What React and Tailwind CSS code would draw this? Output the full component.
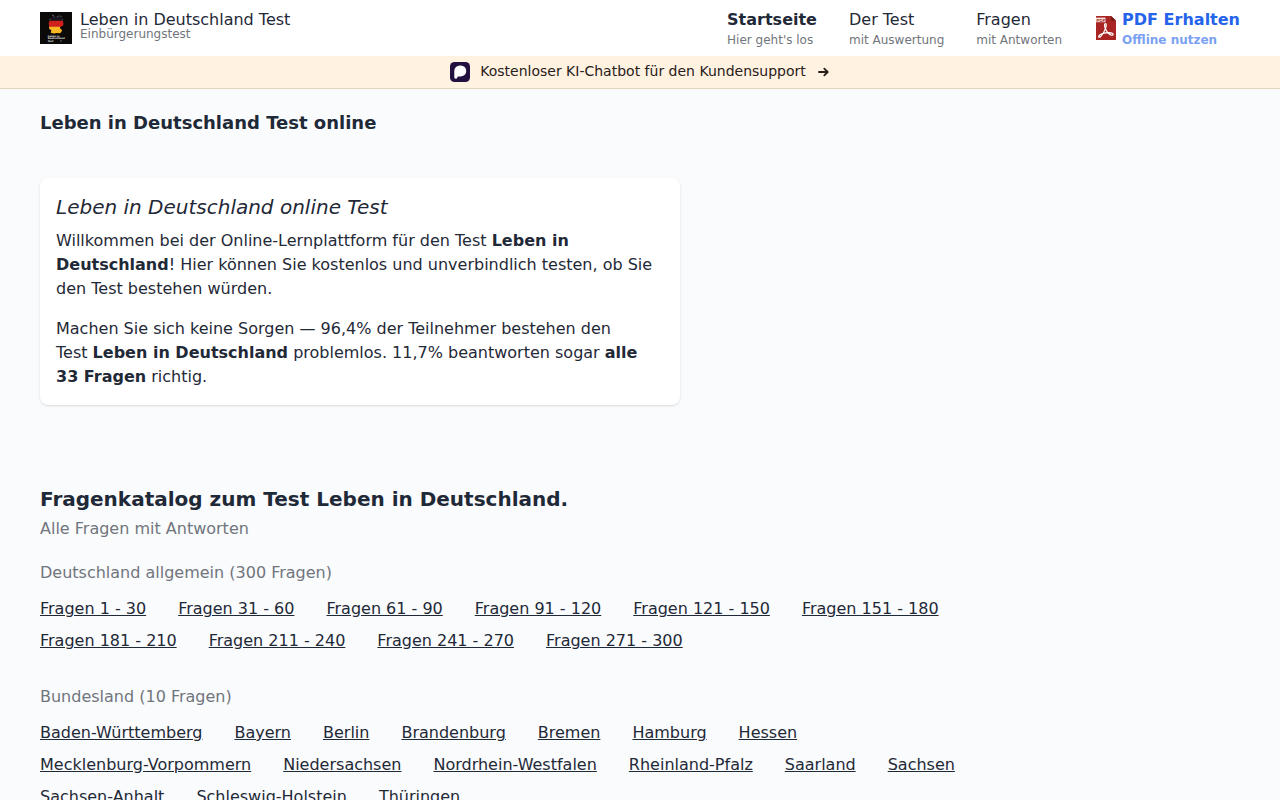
const general = [
  "Fragen 1 - 30", "Fragen 31 - 60", "Fragen 61 - 90", "Fragen 91 - 120", "Fragen 121 - 150",
  "Fragen 151 - 180", "Fragen 181 - 210", "Fragen 211 - 240", "Fragen 241 - 270", "Fragen 271 - 300",
];

const states = [
  "Baden-Württemberg", "Bayern", "Berlin", "Brandenburg", "Bremen", "Hamburg", "Hessen",
  "Mecklenburg-Vorpommern", "Niedersachsen", "Nordrhein-Westfalen", "Rheinland-Pfalz", "Saarland", "Sachsen",
  "Sachsen-Anhalt", "Schleswig-Holstein", "Thüringen",
];

const nav = [
  { title: "Startseite", sub: "Hier geht's los", active: true },
  { title: "Der Test", sub: "mit Auswertung" },
  { title: "Fragen", sub: "mit Antworten" },
];

function Logo() {
  return (
    <svg viewBox="0 0 32 32" className="size-8 shrink-0">
      <rect width="32" height="32" fill="#0b0a08" />
      <path d="M10.200 8.800L10 6.500l2.500-1.300L12 3l2.300.6 1.500 1.400 2.600-1.600 2.600.9 1.200 4.500z" fill="#1a1520" />
      <path d="M9.600 8.700h13.200l.6 2.800-.2 1.900-2.600 1.500H9.200l-.5-3.300z" fill="#cf211b" />
      <path d="M9 14.800h11.200l-.4 1.100 2.300 2.300-.8 1.700-1.300 1.300-3.300-.2-2.800.6-3.200-.9.700-2.500L9.300 17z" fill="#fbb724" />
      <path d="M12 3l2 .6M13.600 4.300l1 .8M16.800 5l2-1.200M20.300 3.500l1.300 1.800M10.200 6.700l-.4 1.600M22 7l.5 1.300" fill="none" stroke="#77808e" strokeWidth=".7" />
      <g fill="#eeeeee" fontFamily="DejaVu Sans" fontWeight="700" fontSize="2.400">
        <text x="7.800" y="24.600">Leben in</text>
        <text x="7.800" y="27.200">Deutschland</text>
        <text x="7.800" y="29.800">Test</text>
      </g>
      <path d="M20 29.400l1.800-.8" stroke="#bbb" strokeWidth=".6" />
    </svg>
  );
}

function PdfIcon() {
  return (
    <svg viewBox="0 0 24 28" className="h-7 w-6 shrink-0">
      <path d="M2 2h15.200L22 6.800V26H2z" fill="#a82523" />
      <path d="M17.200 2L22 6.800h-4.800z" fill="#761917" />
      <rect x="2" y="3.600" width="9.500" height="4.600" fill="#f3dfdb" />
      <text x="2.600" y="7.600" fontSize="4.400" fontWeight="700" fontFamily="Liberation Sans" fill="#a82523">PDF</text>
      <path d="M11.400 9.700c-1.400.2-.9 2.600-.1 4.600 1 2.700 3.500 5.900 6 6.800 1.500.5 2.500-.7 1.300-1.600-1.600-1.200-6.500-1-9.300-.2-2.200.7-4.300 2-4.600 3.200-.2 1 1 1 1.900.1 1.700-1.700 4-5.500 5-8.500.6-2 1.100-4.500-.2-4.400z" fill="none" stroke="#fff" strokeWidth="1.200" />
    </svg>
  );
}

function ChatLogo() {
  return (
    <svg viewBox="0 0 20 20" className="size-5">
      <rect width="20" height="20" rx="4.500" fill="#22103f" />
      <path d="M4.300 15V9a5.600 5.600 0 0 1 5.700-5.600h.8A5.500 5.500 0 0 1 16.200 9c0 3.300-2.500 5.400-5.700 5.400H8.200c-.7 0-.7.500-.8 1.100-.2.800-.8 1.200-1.700 1.200-1 0-1.400-.7-1.400-1.700z" fill="#fff" />
    </svg>
  );
}

function LinkList({ items }) {
  return (
    <div className="mt-3 flex flex-wrap gap-x-8 gap-y-2">
      {items.map((item) => (
        <a key={item} href="#" className="underline">{item}</a>
      ))}
    </div>
  );
}

export default function App() {
  return (
    <div className="h-screen overflow-hidden bg-[#f9fbfd] font-['DejaVu_Sans',sans-serif] text-base text-[#1f2937]">
      <header className="flex h-14 justify-between bg-white px-10">
        <a href="#" className="flex gap-2 pt-3">
          <Logo />
          <div>
            <div className="leading-4">Leben in Deutschland Test</div>
            <div className="text-xs leading-3 text-[#71757c]">Einbürgerungstest</div>
          </div>
        </a>
        <nav className="flex gap-8 pt-2">
          {nav.map((n) => (
            <a key={n.title} href="#">
              <div className={n.active ? "font-bold" : ""}>{n.title}</div>
              <div className="text-xs text-[#71757c]">{n.sub}</div>
            </a>
          ))}
          <a href="#" className="flex gap-1 font-bold text-[#2563eb]">
            <div className="pt-1.5"><PdfIcon /></div>
            <div>
              <div>PDF Erhalten</div>
              <div className="text-xs opacity-60">Offline nutzen</div>
            </div>
          </a>
        </nav>
      </header>
      <a href="#" className="flex h-[33px] items-center justify-center border-b border-[#e2d3bd] bg-[#fff2e1] text-sm text-[#28201a]">
        <ChatLogo />
        <span className="ml-2.5 pb-0.5">Kostenloser KI-Chatbot für den Kundensupport</span>
        <svg viewBox="0 0 12 12" className="ml-3 size-3" fill="none" stroke="currentColor" strokeWidth="1.800" strokeLinejoin="round" strokeLinecap="round">
          <path d="M1 6H9.500M6.300 2.600l3.400 3.400-3.400 3.400" />
        </svg>
      </a>
      <main className="px-10 pt-5">
        <h1 className="text-lg font-bold">Leben in Deutschland Test online</h1>
        <section className="mt-[41px] w-160 rounded-lg bg-white px-4 pt-[15px] pb-4 shadow-sm">
          <h2 className="text-xl italic">Leben in Deutschland online Test</h2>
          <p className="mt-2">
            Willkommen bei der Online-Lernplattform für den Test <b>Leben in Deutschland</b>! Hier können Sie kostenlos und unverbindlich testen, ob Sie den Test bestehen würden.
          </p>
          <p className="mt-4">
            Machen Sie sich keine Sorgen — 96,4% der Teilnehmer bestehen den Test&nbsp;<b>Leben in Deutschland</b> problemlos. 11,7% beantworten sogar <b>alle 33&nbsp;Fragen</b> richtig.
          </p>
        </section>
        <section className="mt-20 w-240">
          <h2 className="text-xl font-bold">Fragenkatalog zum Test Leben in Deutschland.</h2>
          <p className="mt-1 text-[#71757c]">Alle Fragen mit Antworten</p>
          <h3 className="mt-5 text-[#71757c]">Deutschland allgemein (300 Fragen)</h3>
          <LinkList items={general} />
          <h3 className="mt-8 text-[#71757c]">Bundesland (10 Fragen)</h3>
          <LinkList items={states} />
        </section>
      </main>
    </div>
  );
}
